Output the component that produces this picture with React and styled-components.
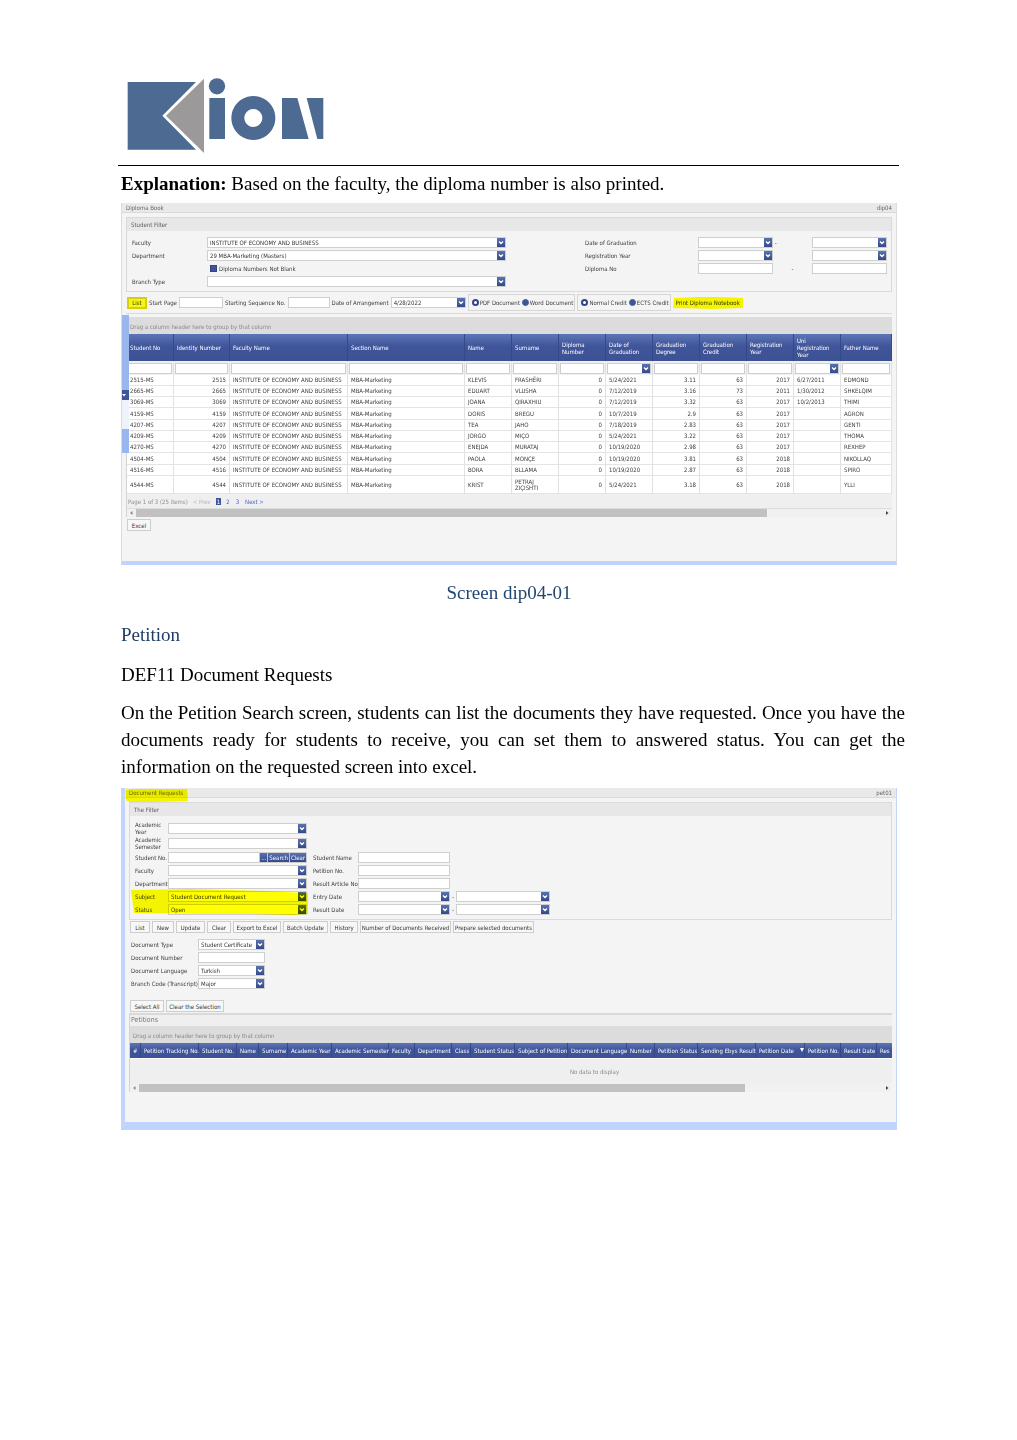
import React from 'react';
import styled, { createGlobalStyle, css } from 'styled-components';

const Global = createGlobalStyle`
  * { box-sizing: border-box; }
  body { margin: 0; background: #fff; }
`;

const navy = '#3f5596';
const ui = '"DejaVu Sans Condensed", "DejaVu Sans", sans-serif';

/* ---------- document ---------- */

const Page = styled.main`
  padding: 78px 118px 96px;
  font: 19px/27px "Liberation Serif", "Times New Roman", serif;
  color: #000;
`;
const Letterhead = styled.header`
  padding: 0 9px 11px;
  border-bottom: 1px solid #000;
  svg { display: block; }
`;
const Body = styled.div`
  padding: 4px 2px 0 3px;
`;
const Text = styled.p`
  margin: ${(p) => p.$top || 0}px -8px 0 0;
  text-align: justify;
`;
const Caption = styled.p`
  margin: 14px 0 0;
  text-align: center;
  color: #1f4571;
`;
const Heading = styled.h2`
  margin: 15px 0 0;
  font-size: 19px;
  font-weight: normal;
  color: #1f3d63;
`;

/* ---------- application window ---------- */

const Window = styled.section`
  position: relative;
  margin-top: ${(p) => (p.$framed ? 8 : 6)}px;
  font: 6px/7px ${ui};
  color: #3c3c3c;
  background: #f4f4f4;
  border-style: solid;
  border-color: ${(p) => (p.$framed ? '#c3d5fa' : '#dcdcdc')};
  border-bottom-color: #c0d3fb;
  border-width: ${(p) => (p.$framed ? '0 1px 8px 4px' : '0 1px 4px 1px')};
`;
const TitleBar = styled.div`
  display: flex;
  justify-content: space-between;
  height: 10px;
  padding: 1px 4px 0;
  background: #e9e9e9;
  border-bottom: 1px solid #dadada;
  color: #666;
`;
const Content = styled.div`
  padding: 4px 4px 30px;
`;
const Group = styled.fieldset`
  position: relative;
  min-width: 0;
  margin: 0;
  padding: 0;
  border: 1px solid #dadada;
`;
const GroupTitle = styled.div`
  height: 13px;
  padding: 3px 4px;
  background: #e7e7e7;
  color: #606060;
`;
const FilterBody = styled.div`
  display: flex;
  justify-content: space-between;
  padding: 5px 4px 4px 5px;
`;
const Form = styled.div`
  display: grid;
  grid-template-columns: ${(p) => p.$cols};
  grid-template-rows: ${(p) => p.$rows || 'none'};
  grid-auto-rows: 12px;
  row-gap: 1px;
  align-items: center;
  align-content: start;
`;
const DocumentForm = styled(Form)`
  margin: 5px 0 11px 2px;
`;
const Label = styled.label`
  grid-column: ${(p) => p.$col || 'auto'};
  white-space: ${(p) => (p.$wrap ? 'normal' : 'nowrap')};
`;
const Dash = styled.span`
  text-align: ${(p) => p.$align || 'center'};
`;

const fieldBox = css`
  width: ${(p) => (p.$w ? p.$w + 'px' : '100%')};
  height: 11px;
  border: 1px solid #cfcfcf;
  background: #fff;
`;
const Input = styled.input`
  ${fieldBox}
  display: block;
  min-width: 0;
  padding: 0 2px;
  border-radius: 0;
  font: inherit;
  color: #333;
  outline: none;
`;
const ComboBox = styled.span`
  ${fieldBox}
  display: grid;
  grid-template-columns: minmax(0, 1fr) 8px;
  select {
    grid-area: 1 / 1 / 2 / 3;
    appearance: none;
    width: 100%;
    height: 9px;
    padding: 0 9px 0 2px;
    border: 0;
    border-radius: 0;
    background: none;
    font: inherit;
    line-height: 9px;
    color: #333;
    outline: none;
  }
  svg {
    grid-area: 1 / 2;
    width: 8px;
    height: 9px;
    background: linear-gradient(#5a72b0, #34498a);
    pointer-events: none;
  }
`;
const LookupBox = styled.span`
  ${fieldBox}
  display: flex;
  input { flex: 1; height: 9px; border: 0; }
`;
const LookupButton = styled.button`
  height: 9px;
  padding: 0 1px;
  border: 0;
  border-left: 1px solid #b9c3df;
  background: linear-gradient(#5a72b0, #34498a);
  font: inherit;
  color: #fff;
`;

const Check = styled.input`
  appearance: none;
  flex: none;
  width: 7px;
  height: 7px;
  margin: 0;
  border: 1px solid #2f4684;
  background: ${navy};
  ${(p) => p.type === 'radio' && css`
    border-radius: 50%;
    border-color: #4460a4;
    &:checked { border: 2px solid #2c4789; background: #fff; }
  `}
`;
const Option = styled.label`
  display: flex;
  align-items: center;
  gap: 1px;
  white-space: nowrap;
`;
const CheckRow = styled(Option)`
  grid-column: 2;
  gap: 2px;
  padding-left: 3px;
`;
const RadioBox = styled.div`
  display: flex;
  align-items: center;
  gap: 2px;
  height: 17px;
  padding: 0 1px 0 3px;
  border: 1px solid #d6d6d6;
`;

const Button = styled.button`
  position: relative;
  flex: none;
  width: ${(p) => p.$w}px;
  height: 12px;
  padding: 0;
  border: 1px solid #cdcdcd;
  background: #f7f7f7;
  font: inherit;
  color: #333;
  white-space: nowrap;
  ${(p) => p.$active && css`
    border: 2px solid #d5cf10;
    background: #f6f614;
  `}
  ${(p) => p.$plain && css`
    border: 0;
    background: none;
  `}
`;
const Toolbar = styled.div`
  display: flex;
  align-items: center;
  gap: 2px;
  margin: ${(p) => p.$margin || '0'};
`;
const Rule = styled.hr`
  height: ${(p) => p.$h || 1}px;
  margin: ${(p) => p.$margin || '0'};
  border: 0;
  background: #d9d9d9;
`;

/* ---------- data grid ---------- */

const Grid = styled.div`
  overflow: hidden;
  border-left: 1px solid #d4d4d4;
`;
const GridTitle = styled.div`
  height: 11px;
  padding: 1px 1px;
  background: #efefef;
  font-size: 7px;
  line-height: 9px;
  color: #777;
`;
const GroupPanel = styled.div`
  height: 17px;
  padding: 6px 3px 0;
  background: #dcdcdc;
  color: #8a8a8a;
`;
const Table = styled.table`
  table-layout: fixed;
  width: ${(p) => p.$w || '100%'};
  border-spacing: 0;
  background: #fff;
`;
const HeadCell = styled.th`
  height: ${(p) => p.$h}px;
  padding: 0 0 0 3px;
  border-right: 1px solid #34498a;
  background: linear-gradient(#5d75b6, #40559a 45%, #3d5294);
  font-weight: normal;
  text-align: left;
  color: #fff;
  white-space: ${(p) => (p.$nowrap ? 'nowrap' : 'normal')};
  svg { margin-left: 6px; vertical-align: 1px; }
`;
const FilterCell = styled.td`
  height: 14px;
  padding: 0 1px;
  background: #f0f0f0;
  border-right: 1px solid #e2e2e2;
`;
const BodyRow = styled.tr`
  td { height: 11px; }
  &:nth-child(4n) td { height: 12px; }
  &:last-child td { height: 18px; }
`;
const Cell = styled.td`
  padding: 0 3px;
  border-right: 1px solid #e2e2e2;
  border-bottom: 1px solid #e4e4e4;
  text-align: ${(p) => (p.$num ? 'right' : 'left')};
  line-height: 6px;
  white-space: ${(p) => (p.$wrap ? 'normal' : 'nowrap')};
`;
const EmptyCell = styled.td`
  height: 25px;
  padding: 0;
  border-top: 1px solid #fff;
  background: #efefef;
  text-align: center;
  color: #8a8a8a;
`;
const Pager = styled.nav`
  display: flex;
  align-items: center;
  gap: 4px;
  height: 15px;
  padding: 0 1px;
  background: #efefef;
  border-bottom: 1px solid #dcdcdc;
  color: #8f8f8f;
  a { padding: 0 1px; color: #4a66c4; text-decoration: none; }
  a[aria-current] { background: ${navy}; color: #fff; }
  a[aria-disabled] { color: #b4b4b4; }
`;
const ScrollBar = styled.div`
  display: flex;
  align-items: center;
  gap: 1px;
  height: ${(p) => p.$h}px;
  padding-top: ${(p) => p.$h - 8}px;
  background: #f1f1f1;
  > svg { flex: none; width: 8px; height: 8px; }
`;
const ScrollTrack = styled.div`
  flex: 1;
  height: 8px;
`;
const ScrollThumb = styled.div`
  width: ${(p) => p.$size}%;
  height: 100%;
  background: #c1c1c1;
`;

/* Side panel splitter that lies over the left edge of the window */
const Splitter = styled.div`
  position: absolute;
  left: 0;
  top: 112px;
  display: flex;
  flex-direction: column;
  width: 7px;
`;
const SplitterPart = styled.div`
  height: ${(p) => p.$h}px;
  background: ${(p) => p.$color};
`;

/* Felt-tip highlight lying over text */
const Marker = styled.svg`
  position: absolute;
  left: ${(p) => p.$x}px;
  top: ${(p) => p.$y}px;
  fill: #ffff00;
  mix-blend-mode: multiply;
  pointer-events: none;
`;

const Logo = () => (
  <svg width="197" height="76" viewBox="51 24 591 228" role="img" aria-label="Kion">
    <g fill="#4d6a92">
      <path d="M53 36H258L157 137L258 239H53Z" />
      <circle cx="321" cy="49" r="24.500" />
      <path d="M298 84H345V207H298Z" />
      <path fillRule="evenodd" d="M430 78a66 66 0 1 0 .1 0ZM430 117a27 27 0 1 1 -.1 0Z" />
      <path d="M516 84H562L596 207H516Z" />
      <path d="M590 84H640V207H622Z" />
    </g>
    <path fill="#9b999a" d="M282 26L168 137L282 249Z" />
  </svg>
);

const Combo = ({ id, label, value = '', w }) => (
  <ComboBox $w={w}>
    <select id={id} aria-label={label} defaultValue={value}>
      <option>{value}</option>
    </select>
    <svg viewBox="0 0 8 9" aria-hidden="true">
      <path d="M2 3.500L4 5.500L6 3.500" fill="none" stroke="#fff" strokeWidth="1.300" />
    </svg>
  </ComboBox>
);

const Scroll = ({ size, h }) => (
  <ScrollBar $h={h}>
    <svg viewBox="0 0 8 8"><path d="M5.500 2V6L3 4Z" fill="#8a8a8a" /></svg>
    <ScrollTrack><ScrollThumb $size={size} /></ScrollTrack>
    <svg viewBox="0 0 8 8"><path d="M2 2V6L4.500 4Z" fill="#444" /></svg>
  </ScrollBar>
);

/* ---------- data ---------- */

const columns = [
  ['Student No', 47], ['Identity Number', 56, 'num'], ['Faculty Name', 118], ['Section Name', 117],
  ['Name', 47], ['Surname', 47, 'wrap'], ['Diploma Number', 47, 'num'], ['Date of Graduation', 47, 'date'],
  ['Graduation Degree', 47, 'num'], ['Graduation Credit', 47, 'num'], ['Registration Year', 47, 'num'],
  ['Uni Registration Year', 47, 'date'], ['Father Name', 51],
];
const I = 'INSTITUTE OF ECONOMY AND BUSINESS';
const M = 'MBA-Marketing';
const students = [
  ['2515', 'KLEVIS', 'FRASHËRI', '5/24/2021', '3.11', '63', '2017', '6/27/2011', 'EDMOND'],
  ['2665', 'EDUART', 'VLUSHA', '7/12/2019', '3.16', '73', '2011', '1/30/2012', 'SHKELQIM'],
  ['3069', 'JOANA', 'QIRAXHIU', '7/12/2019', '3.32', '63', '2017', '10/2/2013', 'THIMI'],
  ['4159', 'DORIS', 'BREGU', '10/7/2019', '2.9', '63', '2017', '', 'AGRON'],
  ['4207', 'TEA', 'JAHO', '7/18/2019', '2.83', '63', '2017', '', 'GENTI'],
  ['4209', 'JORGO', 'MIÇO', '5/24/2021', '3.22', '63', '2017', '', 'THOMA'],
  ['4270', 'ENEJDA', 'MURATAJ', '10/19/2020', '2.98', '63', '2017', '', 'REXHEP'],
  ['4504', 'PAOLA', 'MONÇE', '10/19/2020', '3.81', '63', '2018', '', 'NIKOLLAQ'],
  ['4516', 'BORA', 'BLLAMA', '10/19/2020', '2.87', '63', '2018', '', 'SPIRO'],
  ['4544', 'KRIST', 'PETRAJ ZIÇISHTI', '5/24/2021', '3.18', '63', '2018', '', 'YLLI'],
].map(([no, name, surname, ...rest]) => [no + '-MS', no, I, M, name, surname, '0', ...rest]);

const petitionColumns = [
  ['#', 11], ['Petition Tracking No.', 58], ['Student No.', 38], ['Name', 22], ['Surname', 29],
  ['Academic Year', 44], ['Academic Semester', 57], ['Faculty', 26], ['Department', 37], ['Class', 19],
  ['Student Status', 44], ['Subject of Petition', 53], ['Document Language', 59], ['Number', 28],
  ['Petition Status', 43], ['Sending Ebys Result', 58], ['Petition Date', 49], ['Petition No.', 36],
  ['Result Date', 36], ['Res', 182],
];
const actions = [
  ['List', 20], ['New', 22], ['Update', 29], ['Clear', 24], ['Export to Excel', 48], ['Batch Update', 45],
  ['History', 28], ['Number of Documents Received', 91], ['Prepare selected documents', 81],
];

/* ---------- windows ---------- */

const DiplomaBook = () => (
  <Window>
    <TitleBar><span>Diploma Book</span><span>dip04</span></TitleBar>
    <Content>
      <Group>
        <GroupTitle>Student Filter</GroupTitle>
        <FilterBody>
          <Form $cols="75px 299px">
            <Label htmlFor="faculty">Faculty</Label>
            <Combo id="faculty" value={I} />
            <Label htmlFor="department">Department</Label>
            <Combo id="department" value="29 MBA-Marketing (Masters)" />
            <CheckRow><Check type="checkbox" />Diploma Numbers Not Blank</CheckRow>
            <Label htmlFor="branch">Branch Type</Label>
            <Combo id="branch" />
          </Form>
          <Form $cols="113px 75px 39px 75px">
            <Label htmlFor="grad-from">Date of Graduation</Label>
            <Combo id="grad-from" />
            <Dash $align="left">&nbsp;-</Dash>
            <Combo label="Date of Graduation, to" />
            <Label htmlFor="reg-from">Registration Year</Label>
            <Combo id="reg-from" />
            <span />
            <Combo label="Registration Year, to" />
            <Label htmlFor="dip-from">Diploma No</Label>
            <Input id="dip-from" />
            <Dash>-</Dash>
            <Input aria-label="Diploma No, to" />
          </Form>
        </FilterBody>
      </Group>
      <Toolbar $margin="2px 0 2px 1px">
        <Button $w={20} $active>List</Button>
        <Label htmlFor="start-page">Start Page</Label>
        <Input id="start-page" $w={44} />
        <Label htmlFor="start-seq">Starting Sequence No.</Label>
        <Input id="start-seq" $w={42} />
        <Label htmlFor="arranged">Date of Arrangement</Label>
        <Combo id="arranged" value="4/28/2022" w={75} />
        <RadioBox>
          <Option><Check type="radio" name="format" defaultChecked />PDF Document</Option>
          <Option><Check type="radio" name="format" />Word Document</Option>
        </RadioBox>
        <RadioBox>
          <Option><Check type="radio" name="credit" defaultChecked />Normal Credit</Option>
          <Option><Check type="radio" name="credit" />ECTS Credit</Option>
        </RadioBox>
        <Button $w={70} $plain>
          Print Diploma Notebook
          <Marker $x={0} $y={0} width="70" height="12" viewBox="0 0 70 12">
            <path d="M1 1L24 0L48 0L70 1V11L40 12L0 11Z" />
          </Marker>
        </Button>
      </Toolbar>
      <Rule $margin="0 0 3px" />
      <Grid>
        <GroupPanel>Drag a column header here to group by that column</GroupPanel>
        <Table>
          <colgroup>{columns.map(([name, w]) => <col key={name} width={w} />)}</colgroup>
          <thead>
            <tr>{columns.map(([name]) => <HeadCell key={name} $h={27}>{name}</HeadCell>)}</tr>
            <tr>
              {columns.map(([name, , kind]) => (
                <FilterCell key={name}>
                  {kind === 'date' ? <Combo label={'Filter ' + name} /> : <Input aria-label={'Filter ' + name} />}
                </FilterCell>
              ))}
            </tr>
          </thead>
          <tbody>
            {students.map((row) => (
              <BodyRow key={row[0]}>
                {row.map((value, i) => (
                  <Cell key={i} $num={columns[i][2] === 'num'} $wrap={columns[i][2] === 'wrap'}>{value}</Cell>
                ))}
              </BodyRow>
            ))}
          </tbody>
        </Table>
        <Pager>
          <span>Page 1 of 3 (25 items)</span>
          <a aria-disabled="true">&lt; Prev</a>
          <a href="#1" aria-current="page">1</a>
          <a href="#2">2</a>
          <a href="#3">3</a>
          <a href="#next">Next &gt;</a>
        </Pager>
        <Scroll size={84.500} h={8} />
      </Grid>
      <Toolbar $margin="2px 0 0 1px"><Button $w={24}>Excel</Button></Toolbar>
    </Content>
    <Splitter>
      <SplitterPart $h={75} $color="#9bb5ee" />
      <SplitterPart $h={10} $color={navy}>
        <svg width="7" height="10" viewBox="0 0 7 10" display="block"><path d="M0 4H4L2 6.500Z" fill="#fff" /></svg>
      </SplitterPart>
      <SplitterPart $h={29} $color="#eef2fb" />
      <SplitterPart $h={24} $color="#9bb5ee" />
    </Splitter>
  </Window>
);

const DocumentRequests = () => (
  <Window $framed>
    <TitleBar>
      <span>Document Requests</span><span>pet01</span>
      <Marker $x={1} $y={0} width="62" height="15" viewBox="0 0 62 15">
        <path d="M0 2L6 1H61L62 13L30 14L4 15L0 12Z" />
      </Marker>
    </TitleBar>
    <Content>
      <Group>
        <GroupTitle>The Filter</GroupTitle>
        <FilterBody>
          <Form $cols="33px 139px 6px 45px 92px 6px 94px" $rows="14px 14px">
            <Label htmlFor="year" $wrap>Academic Year</Label>
            <Combo id="year" />
            <Label htmlFor="semester" $col="1" $wrap>Academic Semester</Label>
            <Combo id="semester" />
            <Label htmlFor="student" $col="1">Student No.</Label>
            <LookupBox>
              <Input id="student" />
              <LookupButton>...</LookupButton>
              <LookupButton>Search</LookupButton>
              <LookupButton>Clear</LookupButton>
            </LookupBox>
            <Label htmlFor="name" $col="4">Student Name</Label>
            <Input id="name" />
            <Label htmlFor="faculty2" $col="1">Faculty</Label>
            <Combo id="faculty2" />
            <Label htmlFor="petition" $col="4">Petition No.</Label>
            <Input id="petition" />
            <Label htmlFor="department2" $col="1">Department</Label>
            <Combo id="department2" />
            <Label htmlFor="article" $col="4">Result Article No</Label>
            <Input id="article" />
            <Label htmlFor="subject" $col="1">Subject</Label>
            <Combo id="subject" value="Student Document Request" />
            <Label htmlFor="entry" $col="4">Entry Date</Label>
            <Combo id="entry" />
            <Dash>-</Dash>
            <Combo label="Entry Date, to" />
            <Label htmlFor="status" $col="1">Status</Label>
            <Combo id="status" value="Open" />
            <Label htmlFor="result" $col="4">Result Date</Label>
            <Combo id="result" />
            <Dash>-</Dash>
            <Combo label="Result Date, to" />
          </Form>
        </FilterBody>
        <Marker $x={1} $y={86} width="177" height="26" viewBox="0 0 177 26">
          <path d="M0 1L60 0L134 2L177 4V25L160 26L120 25L70 25L3 24Z" />
        </Marker>
      </Group>
      <Toolbar $margin="1px 0 0 1px">
        {actions.map(([name, w]) => <Button key={name} $w={w}>{name}</Button>)}
      </Toolbar>
      <DocumentForm $cols="67px 67px">
        <Label htmlFor="doc-type">Document Type</Label>
        <Combo id="doc-type" value="Student Certificate" />
        <Label htmlFor="doc-number">Document Number</Label>
        <Input id="doc-number" />
        <Label htmlFor="doc-language">Document Language</Label>
        <Combo id="doc-language" value="Turkish" />
        <Label htmlFor="doc-branch">Branch Code (Transcript)</Label>
        <Combo id="doc-branch" value="Major" />
      </DocumentForm>
      <Toolbar $margin="0 0 1px 1px">
        <Button $w={34}>Select All</Button>
        <Button $w={58}>Clear the Selection</Button>
      </Toolbar>
      <Rule $h={2} />
      <Grid>
        <GridTitle>Petitions</GridTitle>
        <GroupPanel>Drag a column header here to group by that column</GroupPanel>
        <Table $w="929px">
          <colgroup>{petitionColumns.map(([name, w]) => <col key={name} width={w} />)}</colgroup>
          <thead>
            <tr>
              {petitionColumns.map(([name]) => (
                <HeadCell key={name} $h={15} $nowrap>
                  {name}
                  {name === 'Petition Date' && (
                    <svg width="4" height="4" viewBox="0 0 4 4"><path d="M0 0H4L2 4Z" fill="#fff" /></svg>
                  )}
                </HeadCell>
              ))}
            </tr>
          </thead>
          <tbody><tr><EmptyCell colSpan={petitionColumns.length}>No data to display</EmptyCell></tr></tbody>
        </Table>
        <Scroll size={81.500} h={9} />
      </Grid>
    </Content>
  </Window>
);

export default function App() {
  return (
    <Page>
      <Global />
      <Letterhead><Logo /></Letterhead>
      <Body>
        <Text><strong>Explanation:</strong> Based on the faculty, the diploma number is also printed.</Text>
        <DiplomaBook />
        <Caption>Screen dip04-01</Caption>
        <Heading>Petition</Heading>
        <Text $top={13}>DEF11 Document Requests</Text>
        <Text $top={11}>
          On the Petition Search screen, students can list the documents they have requested. Once you have the
          documents ready for students to receive, you can set them to answered status. You can get the
          information on the requested screen into excel.
        </Text>
        <DocumentRequests />
      </Body>
    </Page>
  );
}
